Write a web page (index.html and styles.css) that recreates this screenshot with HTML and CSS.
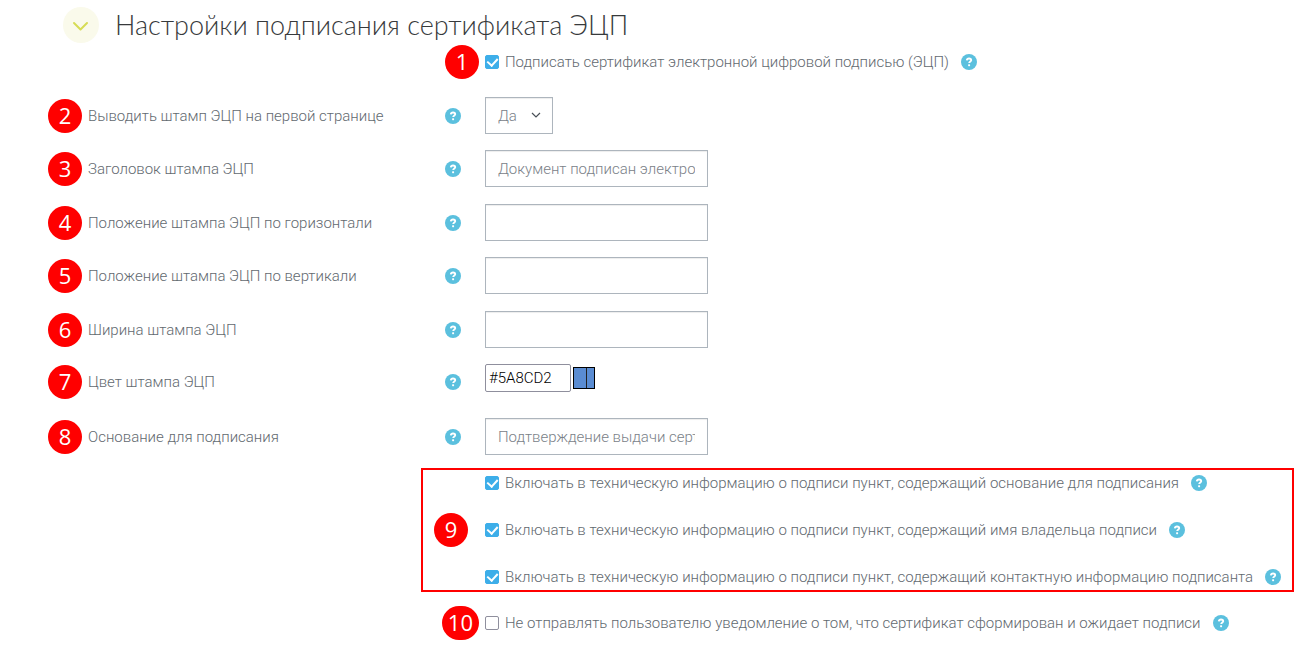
FILE: index.html
```html
<!DOCTYPE html>
<html lang="ru">
<head>
<meta charset="utf-8">
<meta name="viewport" content="width=device-width, initial-scale=1">
<title>Настройки подписания сертификата ЭЦП</title>
<link rel="stylesheet" href="styles.css">
</head>
<body>
<svg class="symbols" aria-hidden="true">
  <symbol id="help" viewBox="0 0 16 16">
    <circle cx="8" cy="8" r="8" fill="#5bc0de"/>
    <path d="M5.800 6.300C6 5 6.900 4.500 8 4.500c1.300 0 2.200.700 2.200 1.700C10.200 7.500 8.200 7.500 8.200 9.100" fill="none" stroke="#fff" stroke-width="1.900"/>
    <rect x="7.100" y="10.200" width="2" height="2" rx=".6" fill="#fff"/>
  </symbol>
</svg>
<form class="settings">
  <header class="head">
    <button class="toggle" type="button" aria-label="Свернуть">
      <svg viewBox="0 0 36 36" width="36" height="36"><path d="M11 16l6.500 6.500L24 16" fill="none" stroke="#d6dc55" stroke-width="2" stroke-linecap="round" stroke-linejoin="round"/></svg>
    </button>
    <h1 class="title">Настройки подписания сертификата ЭЦП</h1>
  </header>

  <div class="check-row numbered">
    <span class="badge">1</span>
    <label class="check"><input type="checkbox" checked>Подписать сертификат электронной цифровой подписью (ЭЦП)</label>
    <button class="help" type="button" aria-label="Справка"><svg><use href="#help"/></svg></button>
  </div>

  <div class="fields">
    <div class="row">
      <span class="badge">2</span>
      <label class="label" for="first">Выводить штамп ЭЦП на первой странице</label>
      <button class="help" type="button" aria-label="Справка"><svg><use href="#help"/></svg></button>
      <div class="select-box">
        <select class="control" id="first"><option>Да</option><option>Нет</option></select>
        <svg class="arrow" viewBox="0 0 10 6" width="10" height="6"><path d="M1 1l4 4 4-4" fill="none" stroke="#495057" stroke-width="1.200"/></svg>
      </div>
    </div>
    <div class="row">
      <span class="badge">3</span>
      <label class="label" for="stamp-title">Заголовок штампа ЭЦП</label>
      <button class="help" type="button" aria-label="Справка"><svg><use href="#help"/></svg></button>
      <input class="control" id="stamp-title" type="text" value="Документ подписан электронной подписью">
    </div>
    <div class="row">
      <span class="badge">4</span>
      <label class="label" for="pos-x">Положение штампа ЭЦП по горизонтали</label>
      <button class="help" type="button" aria-label="Справка"><svg><use href="#help"/></svg></button>
      <input class="control" id="pos-x" type="text">
    </div>
    <div class="row">
      <span class="badge">5</span>
      <label class="label" for="pos-y">Положение штампа ЭЦП по вертикали</label>
      <button class="help" type="button" aria-label="Справка"><svg><use href="#help"/></svg></button>
      <input class="control" id="pos-y" type="text">
    </div>
    <div class="row">
      <span class="badge">6</span>
      <label class="label" for="stamp-width">Ширина штампа ЭЦП</label>
      <button class="help" type="button" aria-label="Справка"><svg><use href="#help"/></svg></button>
      <input class="control" id="stamp-width" type="text">
    </div>
    <div class="row">
      <span class="badge">7</span>
      <label class="label" for="color">Цвет штампа ЭЦП</label>
      <button class="help" type="button" aria-label="Справка"><svg><use href="#help"/></svg></button>
      <div class="color">
        <input class="color-code" id="color" type="text" value="#5A8CD2">
        <button class="swatch" type="button" aria-label="Выбрать цвет"><span class="swatch-new"></span><span class="swatch-old"></span></button>
      </div>
    </div>
    <div class="row">
      <span class="badge">8</span>
      <label class="label" for="reason">Основание для подписания</label>
      <button class="help" type="button" aria-label="Справка"><svg><use href="#help"/></svg></button>
      <input class="control" id="reason" type="text" value="Подтверждение выдачи сертификата">
    </div>
  </div>

  <div class="group">
    <span class="badge">9</span>
    <div class="group-list">
      <div class="check-row">
        <label class="check"><input type="checkbox" checked>Включать в техническую информацию о подписи пункт, содержащий основание для подписания</label>
        <button class="help" type="button" aria-label="Справка"><svg><use href="#help"/></svg></button>
      </div>
      <div class="check-row">
        <label class="check"><input type="checkbox" checked>Включать в техническую информацию о подписи пункт, содержащий имя владельца подписи</label>
        <button class="help" type="button" aria-label="Справка"><svg><use href="#help"/></svg></button>
      </div>
      <div class="check-row">
        <label class="check"><input type="checkbox" checked>Включать в техническую информацию о подписи пункт, содержащий контактную информацию подписанта</label>
        <button class="help" type="button" aria-label="Справка"><svg><use href="#help"/></svg></button>
      </div>
    </div>
  </div>

  <div class="check-row numbered last">
    <span class="badge">10</span>
    <label class="check"><input type="checkbox">Не отправлять пользователю уведомление о том, что сертификат сформирован и ожидает подписи</label>
    <button class="help" type="button" aria-label="Справка"><svg><use href="#help"/></svg></button>
  </div>
</form>
</body>
</html>
```
FILE: styles.css
```css
* { box-sizing: border-box; }
body {
  margin: 0;
  background: #fff;
  color: #62696f;
  font: 300 15px/20px Roboto, "Open Sans", sans-serif;
}
button, input, select { font: inherit; color: inherit; margin: 0; padding: 0; }
.symbols { display: none; }
.settings { padding: 7px 11px 16px 48px; }
.head { display: flex; align-items: center; gap: 16px; padding-left: 15px; }
.toggle { width: 36px; height: 36px; border: 0; border-radius: 50%; background: #fafaeb; }
.toggle svg { display: block; }
.title { margin: 0; color: #373a3c; font: 300 27px/34px Lato, sans-serif; }
.badge {
  display: flex;
  align-items: center;
  justify-content: center;
  flex: none;
  min-width: 34px;
  height: 34px;
  padding: 0 6px 2px;
  border-radius: 17px;
  background: #f00;
  color: #fff;
  font: 400 22px/32px "Open Sans", sans-serif;
}
.help { flex: none; width: 16px; height: 16px; border: 0; background: none; }
.help svg { display: block; width: 16px; height: 16px; }

.check-row { display: flex; align-items: center; gap: 12px; }
.numbered { display: grid; grid-template-columns: 431px auto 1fr; column-gap: 6px; margin-top: 2px; }
.numbered .badge { justify-self: end; }
.numbered .help { margin-left: 6px; }
.check { display: flex; align-items: center; gap: 6px; }
.check input {
  appearance: none;
  display: grid;
  place-items: center;
  flex: none;
  width: 14px;
  height: 14px;
  border: 1px solid #8f8f9d;
  border-radius: 2px;
  background: #fff;
}
.check input:checked { border-color: #3daee9; background: #3daee9; }
.check input:checked::before {
  content: "";
  width: 5px;
  height: 8px;
  margin-bottom: 2px;
  border: solid #fff;
  border-width: 0 2px 2px 0;
  transform: rotate(42deg);
}

.fields { margin-top: 18px; }
.row {
  display: grid;
  grid-template-columns: 34px 351px 16px minmax(0, 241px);
  column-gap: 6px;
  align-items: center;
  height: 36px;
  margin-bottom: 17px;
}
.row:nth-child(even) { margin-bottom: 18px; }
.row .help + * { margin-left: 18px; }
.control {
  width: 223px;
  height: 37px;
  padding: 0 12px;
  border: 1px solid #adb5bd;
  border-radius: 0;
  background: #fff;
  box-shadow: inset 0 1px 1px rgba(0, 0, 0, .075);
  color: #7a8188;
}
.select-box { position: relative; width: 68px; }
.select-box .control { display: block; width: 100%; appearance: none; }
.arrow { position: absolute; right: 12px; top: 15px; pointer-events: none; }
.color { display: flex; align-items: center; gap: 2px; align-self: start; }
.color-code { width: 86px; height: 28px; padding: 0 3px; border: 1px solid #8f8f9d; border-radius: 2px; color: #000; }
.swatch { display: flex; width: 22px; height: 22px; border: 1px solid #000; background: #5a8cd2; }
.swatch-new { width: 13px; height: 20px; border-right: 1px solid #222; }
.swatch-old { flex: 1; height: 20px; }

.group {
  display: flex;
  align-items: center;
  gap: 17px;
  margin: -3px 0 0 373px;
  padding: 3px 0 3px 11px;
  border: 2px solid #f00;
}
.group-list { display: grid; row-gap: 27px; flex: 1; }
.last { margin-top: 14px; }
```
